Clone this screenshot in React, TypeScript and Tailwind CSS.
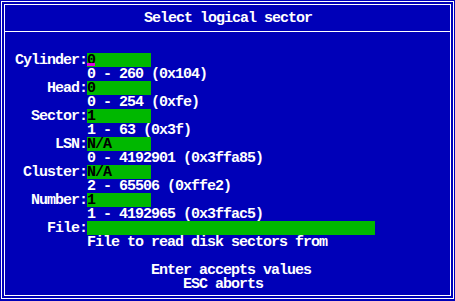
import React from 'react';

type Field = {
  label: string;
  value: string;
  range: string;
  width?: string;
  cursor?: boolean;
};

const fields: Field[] = [
  { label: 'Cylinder:', value: '0', range: '0 - 260 (0x104)', cursor: true },
  { label: 'Head:', value: '0', range: '0 - 254 (0xfe)' },
  { label: 'Sector:', value: '1', range: '1 - 63 (0x3f)' },
  { label: 'LSN:', value: 'N/A', range: '0 - 4192901 (0x3ffa85)' },
  { label: 'Cluster:', value: 'N/A', range: '2 - 65506 (0xffe2)' },
  { label: 'Number:', value: '1', range: '1 - 4192965 (0x3ffac5)' },
  { label: 'File:', value: '', range: 'File to read disk sectors from', width: 'w-[288px]' },
];

export default function App() {
  return (
    <div
      className="w-[455px] h-[301px] bg-[#0000b8] pt-px pl-px text-white font-bold text-[15px] tracking-[-1px] leading-[12px] whitespace-pre"
      style={{ fontFamily: '"Liberation Mono", "DejaVu Sans Mono", monospace' }}
    >
      {/* outer frame */}
      <div className="w-[453px] h-[298px] border border-white p-[2px]">
        {/* inner frame */}
        <div className="w-[447px] h-[292px] border border-white flex flex-col">
          <div className="h-[27px] border-b border-white pt-[8px] pl-[139px]">Select logical sector</div>

          <div className="pt-[21px] flex flex-col">
            {fields.map((f) => (
              <React.Fragment key={f.label}>
                <div className="flex h-[14px]">
                  <div className="w-[82px] text-right pt-[2px]">{f.label}</div>
                  <div className={`${f.width ?? 'w-[64px]'} h-[14px] bg-[#00b800] text-black relative pt-[2px]`}>
                    {f.value}
                    {f.cursor && (
                      <span className="absolute left-0 top-[10px] w-[8px] h-[3px] bg-[#e000e0]" />
                    )}
                  </div>
                </div>
                <div className="h-[14px] pl-[82px] pt-[2px]">{f.range}</div>
              </React.Fragment>
            ))}
            <div className="h-[14px]" />
            <div className="h-[14px] pl-[146px] pt-[2px]">Enter accepts values</div>
            <div className="h-[14px] pl-[178px] pt-[2px]">ESC aborts</div>
          </div>
        </div>
      </div>
    </div>
  );
}
